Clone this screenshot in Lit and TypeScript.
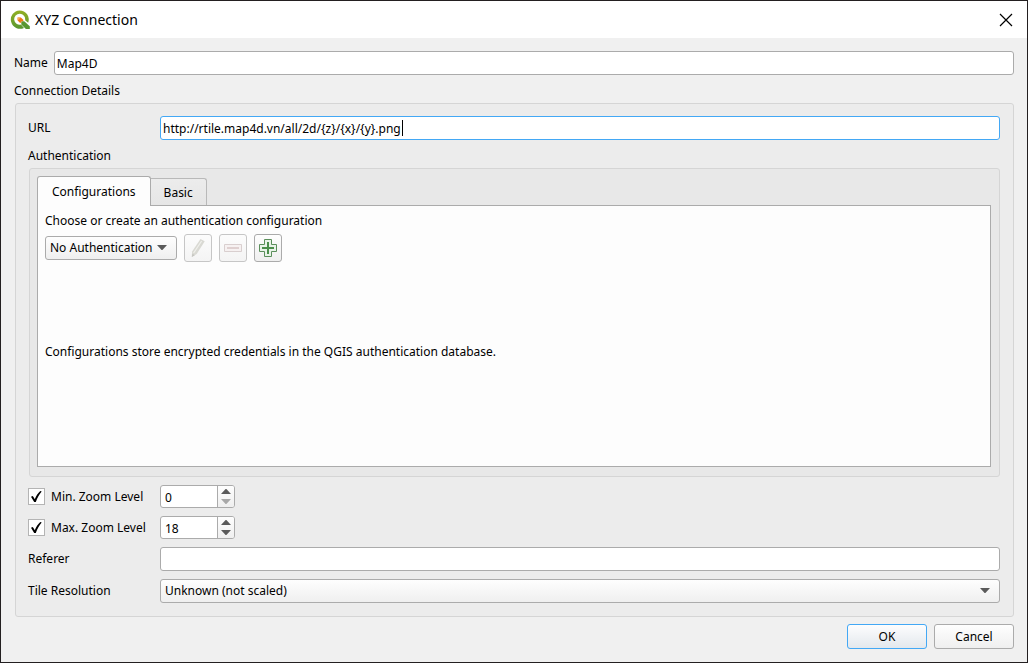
import { LitElement, html, css } from "lit";
import { customElement, property, state } from "lit/decorators.js";
import { classMap } from "lit/directives/class-map.js";

const arrowDown = html`<svg class="arrow" viewBox="0 0 10 5" width="10" height="5" aria-hidden="true"><path d="M0 0h10L5.4 5h-.8z" fill="currentColor"/></svg>`;
const arrowUp = html`<svg class="arrow" viewBox="0 0 10 5" width="10" height="5" aria-hidden="true"><path d="M0 5h10L5.4 0h-.8z" fill="currentColor"/></svg>`;

const controlStyles = css`
  :host {
    --edge: #ababab;
    --focus: #43a8f5;
    --face: linear-gradient(#fefefe, #efefef);
    font: 12px/16px "Noto Sans", "Open Sans", sans-serif;
    color: #000;
  }
  *,
  *::before,
  *::after {
    box-sizing: border-box;
  }
  input,
  select,
  button {
    font: inherit;
    color: inherit;
    margin: 0;
    outline: none;
  }
`;

@customElement("zoom-spin")
class ZoomSpin extends LitElement {
  @property({ type: Number }) value = 0;
  @property() label = "";

  static styles = [
    controlStyles,
    css`
      :host {
        display: block;
        width: 75px;
      }
      .spin {
        display: flex;
        height: 23px;
        border: 1px solid var(--edge);
        border-radius: 3px;
        background: #fff;
        overflow: hidden;
      }
      input {
        flex: 1;
        min-width: 0;
        border: 0;
        padding: 2px 4px 0;
        background: none;
        appearance: textfield;
      }
      input::-webkit-inner-spin-button {
        appearance: none;
      }
      .steps {
        display: flex;
        flex-direction: column;
        width: 17px;
        border-left: 1px solid var(--edge);
        background: var(--face);
      }
      button {
        flex: 1;
        display: flex;
        align-items: center;
        justify-content: center;
        min-height: 0;
        padding: 0;
        border: 0;
        background: none;
        color: #5a5a5a;
      }
      button:disabled {
        color: #a8a8a8;
      }
    `,
  ];

  render() {
    return html`<div class="spin">
      <input type="number" aria-label=${this.label} .value=${String(this.value)} />
      <div class="steps">
        <button aria-label="Increase" @click=${() => this.value++}>${arrowUp}</button>
        <button aria-label="Decrease" ?disabled=${this.value <= 0} @click=${() => this.value--}>${arrowDown}</button>
      </div>
    </div>`;
  }
}

@customElement("app-root")
class AppRoot extends LitElement {
  @state() private tab = 0;

  static styles = [
    controlStyles,
    css`
      :host {
        display: block;
      }
      .dialog {
        display: flex;
        flex-direction: column;
        min-height: 100vh;
        border: 1px solid #231f20;
        background: #f0f0f0;
      }
      .titlebar {
        display: flex;
        align-items: center;
        height: 37px;
        padding: 0 14px 0 9px;
        background: #fff;
      }
      h1 {
        flex: 1;
        margin: 0 0 0 5px;
        font: 14px/20px "Noto Sans", "Open Sans", sans-serif;
      }
      .close {
        display: flex;
        padding: 0;
        border: 0;
        background: none;
      }
      .body {
        flex: 1;
        display: flex;
        flex-direction: column;
        padding: 13px;
      }
      .name {
        display: flex;
        align-items: center;
        gap: 6px;
      }
      .name .field {
        flex: 1;
      }
      .field {
        display: block;
        width: 100%;
        min-width: 0;
        height: 24px;
        padding: 0 2px;
        border: 1px solid var(--edge);
        border-radius: 3px;
        background: #fff;
      }
      .field.active {
        border-color: var(--focus);
      }
      .heading {
        margin: 8px 0 4px;
      }
      .group {
        flex: 1;
        display: flex;
        flex-direction: column;
        margin-left: 1px;
        padding: 12px 13px 13px 12px;
        border: 1px solid #d5d5d5;
        border-radius: 3px;
        background: #ececec;
      }
      .row {
        display: grid;
        grid-template-columns: 132px 1fr;
        align-items: center;
      }
      .rows {
        display: grid;
        gap: 8px;
        margin-top: 8px;
      }
      .caret-box {
        position: relative;
      }
      .caret {
        position: absolute;
        left: 242px;
        top: 4px;
        width: 1px;
        height: 16px;
        background: #000;
      }
      .auth {
        flex: 1;
        display: flex;
        flex-direction: column;
        margin-left: 1px;
        padding: 7px 8px 9px 7px;
        border: 1px solid #d5d5d5;
        border-radius: 3px;
        background: #e8e8e8;
      }
      .tabs {
        display: flex;
        align-items: flex-end;
      }
      .tab {
        height: 27px;
        padding: 2px 13px 0;
        border: 1px solid #b9b9b9;
        border-bottom: 0;
        border-left: 0;
        border-radius: 0 3px 0 0;
        background: linear-gradient(#ececec, #e6e6e6);
      }
      .tab.selected {
        position: relative;
        height: 30px;
        margin-bottom: -1px;
        padding: 0 14px;
        border: 1px solid var(--edge);
        border-bottom: 0;
        border-radius: 3px 3px 0 0;
        background: #fdfdfd;
      }
      .panel {
        flex: 1;
        display: flex;
        flex-direction: column;
        padding: 7px;
        border: 1px solid var(--edge);
        background: #fdfdfd;
      }
      .tools {
        display: flex;
        align-items: center;
        gap: 7px;
        margin-top: 5px;
      }
      .note {
        margin: auto 0;
        padding-bottom: 18px;
      }
      .combo {
        position: relative;
        width: 100%;
      }
      .combo.small {
        width: 132px;
      }
      .combo select {
        display: block;
        appearance: none;
        width: 100%;
        height: 24px;
        padding: 0 4px;
        border: 1px solid var(--edge);
        border-radius: 3px;
        background: var(--face);
      }
      .combo .arrow {
        position: absolute;
        right: 10px;
        top: 9px;
        color: #5a5a5a;
        pointer-events: none;
      }
      .tool {
        display: flex;
        align-items: center;
        justify-content: center;
        width: 28px;
        height: 28px;
        padding: 0;
        border: 1px solid var(--edge);
        border-radius: 3px;
        background: var(--face);
      }
      .tool:disabled {
        border-color: #c6c6c6;
        background: linear-gradient(#fcfcfc, #f4f4f4);
      }
      .check {
        display: grid;
        grid-template-columns: 17px auto;
        justify-content: start;
        align-items: center;
        gap: 6px;
      }
      .check input {
        grid-area: 1 / 1;
        appearance: none;
        width: 17px;
        height: 17px;
        border: 1px solid #b4b4b4;
        background: #fff;
      }
      .check svg {
        grid-area: 1 / 1;
        pointer-events: none;
      }
      .check input:not(:checked) + svg {
        visibility: hidden;
      }
      .actions {
        display: flex;
        justify-content: flex-end;
        gap: 7px;
        margin-top: 7px;
      }
      .action {
        width: 80px;
        height: 25px;
        padding: 1px 0 0;
        border: 1px solid var(--edge);
        border-radius: 3px;
        background: var(--face);
      }
      .action.default {
        border-color: var(--focus);
        background: linear-gradient(#fdfdfe, #e3e8ed);
      }
    `,
  ];

  private zoomRow(label: string, value: number) {
    return html`<div class="row">
      <label class="check">
        <input type="checkbox" checked />
        <svg width="17" height="17" viewBox="0 0 17 17" aria-hidden="true">
          <path d="M3 8.800 4.800 8l2 3.200C8.200 7.700 10 5 12.300 3l1.400.5C11.300 6.300 9.300 10 7.800 14H6.200z" fill="#000" />
        </svg>
        <span>${label}</span>
      </label>
      <zoom-spin .value=${value} .label=${label}></zoom-spin>
    </div>`;
  }

  render() {
    return html`<div class="dialog">
      <header class="titlebar">
        <svg width="20" height="20" viewBox="0 0 20 20" aria-hidden="true">
          <defs>
            <linearGradient id="ring" x2="0" y2="1">
              <stop stop-color="#93b023" />
              <stop offset="1" stop-color="#589632" />
            </linearGradient>
          </defs>
          <path d="M9.600.4a9.200 9.200 0 0 1 8.600 12.400l-3.100-2.600A5.500 5.500 0 1 0 11 14.600l3 3.300A9.200 9.200 0 1 1 9.600.4z" fill="url(#ring)" />
          <path d="M11.300 11.300h2.900l5.600 5V19h-3.900l-4.600-4.400z" fill="#589632" />
          <path d="M7.600 7.400h3.200l2.500 2.400v1.500h-2v1.400H9.900l-2.300-2.300z" fill="#ee7913" />
          <path d="M7.600 7.400h2.600L9 9.800H7.600z" fill="#f6ad5a" />
        </svg>
        <h1>XYZ Connection</h1>
        <button class="close" aria-label="Close">
          <svg width="14" height="14" viewBox="0 0 14 14"><path d="m1 1 12 12M13 1 1 13" stroke="#000" stroke-width="1.200" /></svg>
        </button>
      </header>
      <main class="body">
        <div class="name">
          <label for="name">Name</label>
          <input class="field" id="name" value="Map4D" />
        </div>
        <div class="heading">Connection Details</div>
        <section class="group">
          <div class="row">
            <label for="url">URL</label>
            <div class="caret-box">
              <input class="field active" id="url" value="http://rtile.map4d.vn/all/2d/{z}/{x}/{y}.png" />
              <span class="caret"></span>
            </div>
          </div>
          <div class="heading">Authentication</div>
          <div class="auth">
            <div class="tabs" role="tablist">
              ${["Configurations", "Basic"].map(
                (name, i) => html`<button
                  role="tab"
                  aria-selected=${this.tab === i}
                  class=${classMap({ tab: true, selected: this.tab === i })}
                  @click=${() => (this.tab = i)}
                >${name}</button>`,
              )}
            </div>
            <div class="panel" role="tabpanel">
              <label for="config">Choose or create an authentication configuration</label>
              <div class="tools">
                <div class="combo small">
                  <select id="config"><option>No Authentication</option></select>${arrowDown}
                </div>
                <button class="tool" disabled aria-label="Edit">
                  <svg width="20" height="20" viewBox="0 0 20 20">
                    <path d="m12.500 1 4.200 2.300L8.700 16l-4.900 3 .3-5.600z" fill="#d9d9d3" />
                    <path d="m13.600 3-8 12" stroke="#f0f0ec" stroke-width="1.200" />
                    <path d="m4.500 15.800 2.300 1.500-3 1.700z" fill="#c5c5c0" />
                  </svg>
                </button>
                <button class="tool" disabled aria-label="Remove">
                  <svg width="20" height="20" viewBox="0 0 20 20">
                    <path d="M1.500 6.500h17v7h-17z" fill="#f6f1f1" stroke="#d9cfcf" />
                    <path d="M4 9h12v2H4z" fill="#dfd0d0" />
                  </svg>
                </button>
                <button class="tool" aria-label="Add">
                  <svg width="20" height="20" viewBox="0 0 20 20">
                    <path d="M6.500 1.500h7v5h5v7h-5v5h-7v-5h-5v-7h5z" fill="#e9f3e9" stroke="#5b8f5b" />
                    <path d="M9 4h2v5h5v2h-5v5H9v-5H4V9h5z" fill="#4c8f4c" />
                  </svg>
                </button>
              </div>
              <div class="note">Configurations store encrypted credentials in the QGIS authentication database.</div>
            </div>
          </div>
          <div class="rows">
            ${this.zoomRow("Min. Zoom Level", 0)} ${this.zoomRow("Max. Zoom Level", 18)}
            <div class="row">
              <label for="referer">Referer</label>
              <input class="field" id="referer" />
            </div>
            <div class="row">
              <label for="resolution">Tile Resolution</label>
              <div class="combo">
                <select id="resolution"><option>Unknown (not scaled)</option></select>${arrowDown}
              </div>
            </div>
          </div>
        </section>
        <footer class="actions">
          <button class="action default">OK</button>
          <button class="action">Cancel</button>
        </footer>
      </main>
    </div>`;
  }
}
